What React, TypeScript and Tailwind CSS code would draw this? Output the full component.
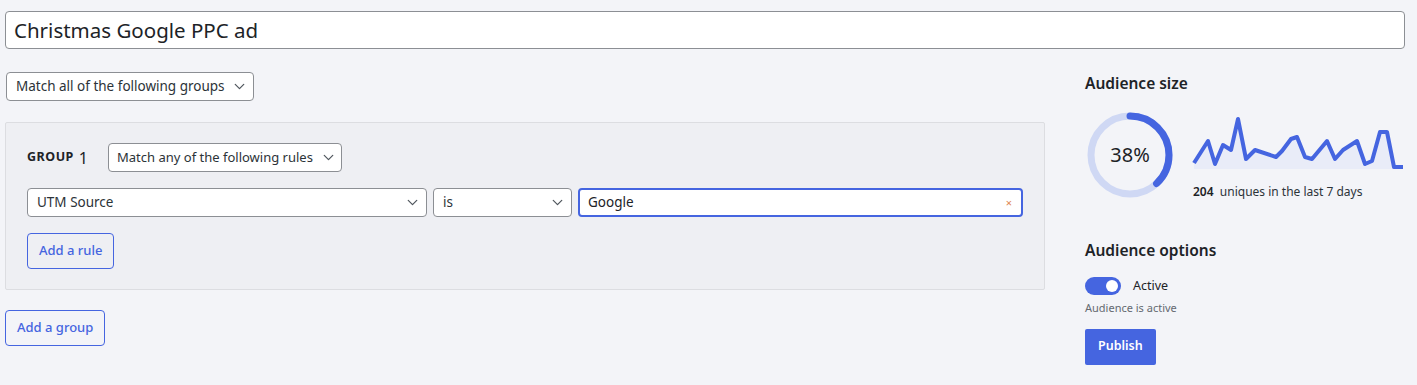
import { ChevronDown } from 'lucide-react';

const spark = [
  [5, 51], [19, 29], [26, 52], [34, 33], [42, 38], [49, 7], [57, 47], [66, 38], [87, 45], [93, 39],
  [102, 27], [108, 25], [116, 45], [123, 47], [138, 29], [146, 47], [154, 38], [168, 29], [176, 52],
  [183, 49], [191, 20], [198, 20], [205, 55], [214, 55],
];

function Select({ label, className = '' }: { label: string; className?: string }) {
  return (
    <div
      className={`flex h-[29px] items-center justify-between whitespace-nowrap rounded-[4px] border border-[#8c8f94] bg-white pl-[9px] pr-[5px] text-[13.5px] text-[#2c3338] ${className}`}
    >
      <span>{label}</span>
      <ChevronDown size={17} strokeWidth={1.75} className="shrink-0 text-[#50575e]" />
    </div>
  );
}

function Donut({ pct }: { pct: number }) {
  const r = 39;
  const c = 2 * Math.PI * r;
  return (
    <div className="relative h-[90px] w-[90px]">
      <svg width="90" height="90" viewBox="0 0 90 90">
        <circle cx="45" cy="45" r={r} fill="none" stroke="#cfd8f4" strokeWidth="7" />
        <circle
          cx="45"
          cy="45"
          r={r}
          fill="none"
          stroke="#4565e0"
          strokeWidth="7"
          strokeLinecap="round"
          strokeDasharray={`${(c * pct) / 100} ${c}`}
          transform="rotate(-90 45 45)"
        />
      </svg>
      <div className="absolute inset-0 flex items-center justify-center text-[20px] text-[#1d2327]">{pct}%</div>
    </div>
  );
}

function Sparkline() {
  const line = spark.map(([x, y]) => `${x},${y}`).join(' ');
  const area = `5,57 ${line} 214,57`;
  return (
    <svg width="216" height="60" viewBox="0 0 216 60">
      <polygon points={area} fill="#e9ecf8" />
      <polyline points={line} fill="none" stroke="#4565e0" strokeWidth="4" strokeLinejoin="round" />
    </svg>
  );
}

export default function App() {
  return (
    <div className="min-h-screen bg-[#f3f4f8] px-[5px] pt-[11px] font-['Noto_Sans',sans-serif] text-[#2c3338]">
      <div className="flex h-[38px] w-[1400px] items-center rounded-[4px] border border-[#8c8f94] bg-white px-[8px] text-[20.5px] text-[#1d2327]">
        Christmas Google PPC ad
      </div>

      <div className="mt-[23px] flex">
        {/* Rules builder */}
        <div className="w-[1040px]">
          <Select label="Match all of the following groups" className="ml-px w-[248px]" />

          <div className="mt-[21px] rounded-[2px] border border-[#dcdde1] bg-[#eeeff3] px-[21px] pt-[20px] pb-[20px]">
            <div className="flex items-center">
              <span className="text-[12.5px] font-bold tracking-[0.5px] text-[#1d2327]">GROUP</span>
              <span className="ml-[5px] text-[16px] text-[#1d2327]">1</span>
              <Select label="Match any of the following rules" className="ml-[20px] w-[234px] !pl-[8px] !pr-[4px] !text-[13px]" />
            </div>

            <div className="mt-[16px] flex gap-[6px]">
              <Select label="UTM Source" className="w-[400px]" />
              <Select label="is" className="w-[139px]" />
              <div className="flex h-[29px] flex-1 items-center justify-between rounded-[4px] border-2 border-[#4565e0] bg-white pl-[8px] pr-[9px] text-[13.5px] text-[#1d2327]">
                <span>Google</span>
                <span className="text-[11px] leading-none text-[#e0834f]">×</span>
              </div>
            </div>

            <button className="mt-[16px] h-[36px] rounded-[4px] border border-[#4565e0] bg-transparent px-[11px] text-[13px] font-medium text-[#4565e0]">
              Add a rule
            </button>
          </div>

          <button className="mt-[20px] h-[36px] rounded-[4px] border border-[#4565e0] bg-transparent px-[11px] text-[13px] font-medium text-[#4565e0]">
            Add a group
          </button>
        </div>

        {/* Audience sidebar */}
        <div className="ml-[40px] flex-1">
          <h2 className="text-[15.5px] font-semibold text-[#1d2327]">Audience size</h2>
          <div className="mt-[15px] flex items-start">
            <Donut pct={38} />
            <div className="ml-[14px] mt-[2px]">
              <Sparkline />
              <p className="mt-[11px] pl-[4px] text-[12px] text-[#2c3338]">
                <span className="font-semibold text-[#1d2327]">204</span>&nbsp; uniques in the last 7 days
              </p>
            </div>
          </div>

          <h2 className="mt-[38px] text-[15.5px] font-semibold text-[#1d2327]">Audience options</h2>
          <div className="mt-[14px] flex items-center">
            <div className="flex h-[18px] w-[36px] items-center justify-end rounded-full bg-[#4565e0] pr-[3px]">
              <div className="h-[12px] w-[12px] rounded-full bg-white" />
            </div>
            <span className="ml-[12px] text-[12.5px] text-[#1d2327]">Active</span>
          </div>
          <p className="mt-[5px] text-[11px] text-[#646970]">Audience is active</p>
          <button className="mt-[12px] h-[36px] rounded-[2px] bg-[#4565e0] px-[13px] text-[12.5px] font-semibold text-white">
            Publish
          </button>
        </div>
      </div>
    </div>
  );
}
